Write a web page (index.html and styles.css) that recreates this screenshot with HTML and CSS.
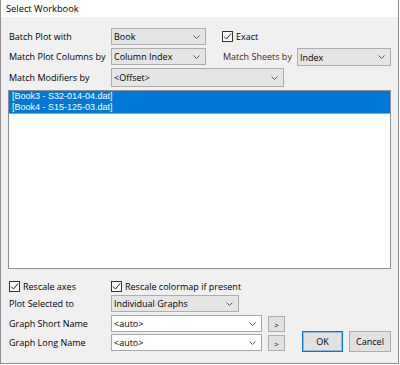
FILE: index.html
```html
<!DOCTYPE html>
<html>
<head>
<meta charset="utf-8">
<link rel="stylesheet" href="styles.css">
</head>
<body>
<div class="window">
  <div class="titlebar">Select Workbook</div>
  <div class="content">
    <div class="top">
      <div class="lbl">Batch Plot with</div>
      <div class="combo ro c2">Book<svg class="chev" width="7" height="4" viewBox="0 0 7 4"><path d="M0.5 0.5L3.5 3.5L6.5 0.5"/></svg></div>
      <div class="check c45"><span class="cb"><svg width="9" height="9" viewBox="0 0 9 9"><path d="M1 4.5L3.5 7L8 1.5"/></svg></span>Exact</div>

      <div class="lbl">Match Plot Columns by</div>
      <div class="combo ro c2">Column Index<svg class="chev" width="7" height="4" viewBox="0 0 7 4"><path d="M0.5 0.5L3.5 3.5L6.5 0.5"/></svg></div>
      <div class="lbl c4 maroon">Match Sheets by</div>
      <div class="combo ro c5 tall">Index<svg class="chev" width="7" height="4" viewBox="0 0 7 4"><path d="M0.5 0.5L3.5 3.5L6.5 0.5"/></svg></div>

      <div class="lbl">Match Modifiers by</div>
      <div class="combo ro wide">&lt;Offset&gt;<svg class="chev" width="7" height="4" viewBox="0 0 7 4"><path d="M0.5 0.5L3.5 3.5L6.5 0.5"/></svg></div>
    </div>

    <div class="listbox">
      <div class="item sel">[Book3 - S32-014-04.dat]</div>
      <div class="item sel last">[Book4 - S15-125-03.dat]</div>
    </div>

    <div class="bottom">
      <div class="check r1"><span class="cb"><svg width="9" height="9" viewBox="0 0 9 9"><path d="M1 4.5L3.5 7L8 1.5"/></svg></span>Rescale axes</div>
      <div class="check r1 span"><span class="cb"><svg width="9" height="9" viewBox="0 0 9 9"><path d="M1 4.5L3.5 7L8 1.5"/></svg></span>Rescale colormap if present</div>

      <div class="lbl">Plot Selected to</div>
      <div class="combo ro plot">Individual Graphs<svg class="chev" width="7" height="4" viewBox="0 0 7 4"><path d="M0.5 0.5L3.5 3.5L6.5 0.5"/></svg></div>

      <div class="lbl r3">Graph Short Name</div>
      <div class="combo ed r3">&lt;auto&gt;<svg class="chev" width="7" height="4" viewBox="0 0 7 4"><path d="M0.5 0.5L3.5 3.5L6.5 0.5"/></svg></div>
      <button class="btn small r3">&gt;</button>

      <div class="lbl r4">Graph Long Name</div>
      <div class="combo ed r4">&lt;auto&gt;<svg class="chev" width="7" height="4" viewBox="0 0 7 4"><path d="M0.5 0.5L3.5 3.5L6.5 0.5"/></svg></div>
      <button class="btn small r4">&gt;</button>

      <button class="btn big ok">OK</button>
      <button class="btn big cancel">Cancel</button>
    </div>
  </div>
</div>
</body>
</html>
```

FILE: styles.css
```css
html, body {
  margin: 0;
  padding: 0;
  background: #ffffff;
}
body {
  font-family: "Open Sans", "Noto Sans", sans-serif;
  font-size: 9px;
  color: #000;
}
.window {
  width: 399px;
  height: 364px;
  box-sizing: border-box;
  border: 1px solid #8f8f8f;
  border-top: none;
  background: #f0f0f0;
  display: flex;
  flex-direction: column;
}
.titlebar {
  height: 17px;
  line-height: 17px;
  background: #ffffff;
  padding-left: 5px;
  font-size: 9.3px;
}
.content {
  padding: 11px 0 0 7px;
}
.top {
  display: grid;
  grid-template-columns: 103px 95px 16px 75px 94px;
  grid-template-rows: 17px 17px 19px;
  row-gap: 3px;
}
.lbl {
  grid-column: 1;
  padding-left: 1px;
  align-self: center;
  white-space: nowrap;
  line-height: 12px;
}
.lbl.c4 { grid-column: 4; }
.maroon { color: #4a1c1c; }
.combo {
  box-sizing: border-box;
  display: flex;
  align-items: center;
  justify-content: space-between;
  padding: 0 5px 0 2px;
  white-space: nowrap;
  height: 17px;
}
.combo.ro {
  background: #e5e5e5;
  border: 1px solid #adadad;
}
.combo.ed {
  background: #ffffff;
  border: 1px solid #a8a8a8;
  grid-column: 2;
  width: 151px;
}
.chev {
  flex: none;
}
.chev path {
  fill: none;
  stroke: #5a5a5a;
  stroke-width: 1;
}
.c2 { grid-column: 2; }
.c45 { grid-column: 4 / 6; }
.c5 { grid-column: 5; }
.tall { height: 18px; }
.wide {
  grid-column: 2 / 6;
  width: 173px;
  height: 19px;
}
.check {
  display: flex;
  align-items: center;
  gap: 3px;
  white-space: nowrap;
}
.top .check { align-self: center; }
.cb {
  box-sizing: border-box;
  width: 11px;
  height: 11px;
  border: 1px solid #333333;
  background: #ffffff;
  display: flex;
  align-items: center;
  justify-content: center;
  flex: none;
}
.cb path {
  fill: none;
  stroke: #222;
  stroke-width: 1;
}
.listbox {
  margin-top: 3px;
  width: 383px;
  height: 179px;
  box-sizing: border-box;
  border: 1px solid #8c8f96;
  background: #ffffff;
}
.item {
  height: 11px;
  line-height: 11px;
  padding-left: 3px;
  white-space: nowrap;
  font-family: "Liberation Sans", Arial, sans-serif;
  font-size: 9px;
}
.item.sel {
  background: #0078d7;
  color: #ffffff;
}
.item.last {
  box-shadow: 0 1px 0 #66aef0;
}
.bottom {
  margin-top: 10px;
  display: grid;
  grid-template-columns: 103px 151px 6px 17px 17px 41px 6px 42px;
  grid-template-rows: 16px 20px 19px 19px;
}
.bottom .check.r1 {
  grid-row: 1;
  grid-column: 1;
  align-self: start;
  margin-top: 1px;
  padding-left: 1px;
}
.bottom .check.span {
  grid-column: 2 / 9;
  padding-left: 0;
}
.bottom .lbl {
  align-self: start;
  line-height: 17px;
}
.plot {
  grid-column: 2;
  grid-row: 2;
  width: 128px;
  align-self: start;
}
.r3 { grid-row: 3; }
.r4 { grid-row: 4; }
.bottom .combo.ed { align-self: start; }
.btn {
  font-family: inherit;
  font-size: 9px;
  color: #000;
  background: #e1e1e1;
  border: 1px solid #adadad;
  padding: 0;
  margin: 0;
  box-sizing: border-box;
}
.btn.small {
  grid-column: 4;
  width: 17px;
  align-self: start;
  margin-top: 1px;
  height: 16px;
  font-size: 8px;
}
.btn.big {
  grid-row: 3 / 5;
  align-self: end;
  height: 21px;
  margin-bottom: 1px;
}
.ok {
  grid-column: 6;
  border: 1px solid #0078d7;
  box-shadow: inset 0 0 0 1px rgba(0, 120, 215, 0.35);
}
.cancel {
  grid-column: 8;
}
```
